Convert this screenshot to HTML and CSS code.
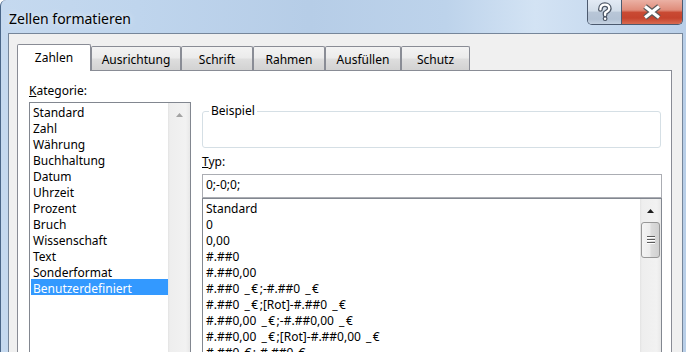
FILE: index.html
```html
<!DOCTYPE html>
<html lang="de">
<head>
<meta charset="utf-8">
<title>Zellen formatieren</title>
<link rel="stylesheet" href="styles.css">
</head>
<body>
<div class="window">
  <div class="titlebar">
    <div class="title">Zellen formatieren</div>
    <div class="caption-buttons">
      <div class="cbtn help">
        <svg width="33" height="24" viewBox="0 0 33 24">
          <path d="M12.4 9.4 C12.4 6.2 14.5 4.6 16.9 4.6 C19.5 4.6 21.3 6.2 21.3 8.6 C21.3 11 18.5 11.8 17.1 13 L17.1 15" fill="none" stroke="#4b5565" stroke-width="4.8" stroke-linecap="round" stroke-linejoin="round"/>
          <circle cx="17.1" cy="18.7" r="2.4" fill="#4b5565"/>
          <path d="M12.4 9.4 C12.4 6.2 14.5 4.6 16.9 4.6 C19.5 4.6 21.3 6.2 21.3 8.6 C21.3 11 18.5 11.8 17.1 13 L17.1 15" fill="none" stroke="#ffffff" stroke-width="2.3" stroke-linecap="round" stroke-linejoin="round"/>
          <circle cx="17.1" cy="18.7" r="1.2" fill="#ffffff"/>
        </svg>
      </div>
      <div class="cbtn close">
        <svg width="60" height="24" viewBox="0 0 60 24">
          <path d="M23 6.5 L37 17.5 M37 6.5 L23 17.5" fill="none" stroke="#5a5a5a" stroke-width="5.6"/>
          <path d="M23 6.5 L37 17.5 M37 6.5 L23 17.5" fill="none" stroke="#ffffff" stroke-width="3.2"/>
        </svg>
      </div>
    </div>
  </div>
  <div class="client">
    <div class="tabs">
      <div class="tab sel w-zahlen">Zahlen</div>
      <div class="tab w-ausr">Ausrichtung</div>
      <div class="tab w-schrift">Schrift</div>
      <div class="tab w-rahmen">Rahmen</div>
      <div class="tab w-ausf">Ausfüllen</div>
      <div class="tab w-schutz">Schutz</div>
    </div>
    <div class="panel">
      <div class="col-left">
        <div class="label"><u>K</u>ategorie:</div>
        <div class="listbox cat">
          <div class="items">
            <div class="item">Standard</div>
            <div class="item">Zahl</div>
            <div class="item">Währung</div>
            <div class="item">Buchhaltung</div>
            <div class="item">Datum</div>
            <div class="item">Uhrzeit</div>
            <div class="item">Prozent</div>
            <div class="item">Bruch</div>
            <div class="item">Wissenschaft</div>
            <div class="item">Text</div>
            <div class="item">Sonderformat</div>
            <div class="item sel">Benutzerdefiniert</div>
          </div>
          <div class="vscroll wide">
            <div class="sbtn">
              <svg width="7" height="4" viewBox="0 0 7 4"><polygon points="0,4 3.5,0 7,4" fill="#a3a3a3"/></svg>
            </div>
          </div>
        </div>
      </div>
      <div class="col-right">
        <fieldset class="group">
          <legend>Beispiel</legend>
          <div class="sample"></div>
        </fieldset>
        <div class="label typ"><u>T</u>yp:</div>
        <div class="textbox">0;-0;0;</div>
        <div class="listbox fmt">
          <div class="items">
            <div class="item">Standard</div>
            <div class="item">0</div>
            <div class="item">0,00</div>
            <div class="item">#.##0</div>
            <div class="item">#.##0,00</div>
            <div class="item">#.##0 <span class="cur">_€</span>;-#.##0 <span class="cur">_€</span></div>
            <div class="item">#.##0 <span class="cur">_€</span>;[Rot]-#.##0 <span class="cur">_€</span></div>
            <div class="item">#.##0,00 <span class="cur">_€</span>;-#.##0,00 <span class="cur">_€</span></div>
            <div class="item">#.##0,00 <span class="cur">_€</span>;[Rot]-#.##0,00 <span class="cur">_€</span></div>
            <div class="item">#.##0 <span class="cur">€</span>;-#.##0 <span class="cur">€</span></div>
            <div class="item">#.##0 <span class="cur">€</span>;[Rot]-#.##0 <span class="cur">€</span></div>
          </div>
          <div class="vscroll">
            <div class="sbtn">
              <svg width="7" height="4" viewBox="0 0 7 4"><polygon points="0,4 3.5,0 7,4" fill="#1e1e1e"/></svg>
            </div>
            <div class="thumb"><div class="grip"></div></div>
          </div>
        </div>
      </div>
    </div>
  </div>
</div>
</body>
</html>
```

FILE: styles.css
```css
html, body {
  margin: 0;
  padding: 0;
}

body {
  width: 686px;
  height: 352px;
  overflow: hidden;
  font-family: "Noto Sans", "Open Sans", sans-serif;
  font-size: 12px;
  color: #000;
}

.window {
  box-sizing: border-box;
  width: 686px;
  height: 352px;
  overflow: hidden;
  display: flex;
  flex-direction: column;
  border-left: 1px solid #4a6688;
  border-top-left-radius: 6px;
  padding: 0 3px 0 7px;
  background: linear-gradient(90deg, #c5d9ef 0%, #bfd5ed 20%, #b6cde7 45%, #bdd3eb 65%, #d3e3f4 78%, #cadcf0 86%, #b9cfe8 100%);
}

.titlebar {
  height: 33px;
  flex-shrink: 0;
  display: flex;
  justify-content: space-between;
  align-items: flex-start;
}

.title {
  font-size: 14px;
  line-height: 19px;
  padding: 9px 0 0 1px;
  color: #000;
  text-shadow: 0 0 6px rgba(255, 255, 255, 0.8);
}

.caption-buttons {
  display: flex;
  height: 24px;
  border: 1px solid #4c5a6f;
  border-top: none;
  border-radius: 0 0 5px 5px;
  overflow: hidden;
}

.cbtn {
  height: 24px;
}

.cbtn svg {
  display: block;
}

.help {
  width: 33px;
  border-right: 1px solid #4c5a6f;
  background: linear-gradient(#e2eaf4 0%, #d2dde9 45%, #b8c6d7 52%, #b3c2d4 80%, #c6d3e2 100%);
}

.close {
  width: 60px;
  background: linear-gradient(#ebb1a4 0%, #df8c7a 42%, #c94a33 52%, #c5432d 75%, #d86a50 100%);
}

.client {
  flex: 1;
  background: #f0f0f0;
  border: 1px solid #76869a;
  border-bottom: none;
  padding: 10px 10px 0 8px;
}

.tabs {
  display: flex;
  align-items: flex-end;
  height: 26px;
}

.tab {
  box-sizing: border-box;
  height: 24px;
  border: 1px solid #898c95;
  border-bottom: none;
  border-radius: 2px 2px 0 0;
  padding-top: 5px;
  line-height: 16px;
  text-align: center;
  white-space: nowrap;
  background: linear-gradient(#f3f3f3 0%, #ebebeb 48%, #dedede 52%, #d2d2d2 100%);
}

.tab.sel {
  height: 27px;
  margin-bottom: -1px;
  background: #fff;
  position: relative;
  z-index: 1;
}

.w-zahlen { width: 74px; }
.w-ausr { width: 90px; }
.w-schrift { width: 72px; }
.w-rahmen { width: 72px; }
.w-ausf { width: 76px; }
.w-schutz { width: 69px; }

.panel {
  box-sizing: border-box;
  width: 655px;
  height: 320px;
  border: 1px solid #898c95;
  background: #fff;
  display: grid;
  grid-template-columns: 162px 460px;
  column-gap: 11px;
  align-items: start;
  padding: 12px 9px 0 11px;
}

.col-left,
.col-right {
  display: flex;
  flex-direction: column;
}

.label {
  height: 16px;
  line-height: 16px;
}

.cat {
  margin-top: 3px;
  height: 270px;
}

.listbox {
  box-sizing: border-box;
  border: 1px solid #828790;
  background: #fff;
  display: flex;
}

.items {
  flex: 1;
  padding-left: 1px;
  overflow: hidden;
}

.item {
  height: 16px;
  line-height: 19px;
  padding-left: 2px;
  white-space: nowrap;
}

.item.sel {
  background: #3399ff;
  color: #fff;
}

.fmt .item {
  word-spacing: 2px;
}

.cur {
  letter-spacing: 1.5px;
}

.vscroll {
  width: 21px;
  flex-shrink: 0;
  display: flex;
  flex-direction: column;
  align-items: center;
  background: linear-gradient(90deg, #e3e3e3 0, #eeeeee 2px, #f2f2f2 80%, #e8e8e8 100%);
}

.vscroll.wide {
  width: 22px;
}

.sbtn {
  height: 21px;
  box-sizing: border-box;
  padding-top: 2px;
  display: flex;
  align-items: center;
  justify-content: center;
}

.sbtn svg {
  display: block;
}

.thumb {
  box-sizing: border-box;
  width: 19px;
  height: 36px;
  margin-top: 2px;
  border: 1px solid #979797;
  border-radius: 3px;
  background: linear-gradient(90deg, #f4f4f4 0%, #ececec 45%, #dcdcdc 55%, #d0d0d0 100%);
  display: flex;
  align-items: center;
  justify-content: center;
}

.grip {
  width: 8px;
  height: 8px;
  background: repeating-linear-gradient(#5a5a5a 0 1px, #ffffff 1px 2px, transparent 2px 3px);
}

.group {
  margin: 20px 1px 0 0;
  padding: 0;
  min-width: 0;
  border: 1px solid #d5dfe5;
  border-radius: 3px;
}

.group legend {
  padding: 0 2px;
  margin-left: 6px;
  line-height: 16px;
}

.sample {
  height: 28px;
}

.typ {
  margin-top: 6px;
}

.textbox {
  box-sizing: border-box;
  height: 24px;
  margin-top: 4px;
  border: 1px solid #abadb3;
  padding: 2px 3px 0;
  line-height: 16px;
  white-space: nowrap;
}

.fmt {
  height: 200px;
}
```
